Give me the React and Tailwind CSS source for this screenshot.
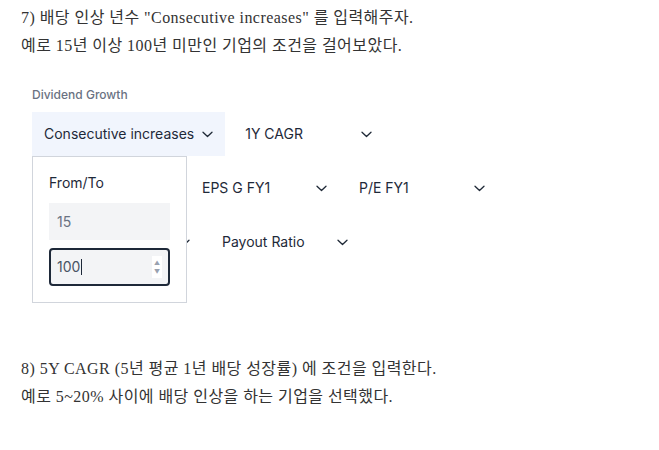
import React from "react"

const Chevron = () => (
  <svg width="11" height="7" viewBox="0 0 11 7" fill="none" className="shrink-0">
    <path d="M1 1.2l4.5 4.3 4.5-4.3" stroke="#1f2937" strokeWidth="1.3" strokeLinecap="round" strokeLinejoin="round" />
  </svg>
)

function Filter({ label, width, active }) {
  return (
    <div
      className={`flex h-[44px] items-center justify-between gap-2 px-3 text-[14px] text-gray-800 ${width} ${
        active ? "bg-[#f1f5fd]" : ""
      }`}
    >
      <span>{label}</span>
      <Chevron />
    </div>
  )
}

export default function App() {
  const serif = { fontFamily: '"Liberation Serif", "Noto Sans CJK KR", serif' }

  return (
    <div className="min-h-[450px] w-[659px] bg-white pl-[21px] pt-[4px] text-[16px] leading-[28px] tracking-[0.45px] text-[#333]" style={serif}>
      <p>7) 배당 인상 년수 "Consecutive increases" 를 입력해주자.</p>
      <p>예로 15년 이상 100년 미만인 기업의 조건을 걸어보았다.</p>

      {/* screener widget */}
      <div className="relative ml-[11px] mt-[27px] tracking-normal" style={{ fontFamily: "Inter, sans-serif" }}>
        <div className="text-[12px] font-medium leading-[16px] text-gray-500">Dividend Growth</div>
        <div className="mt-[9px] flex w-[470px] flex-wrap gap-x-2 gap-y-[10px]">
          <Filter label="Consecutive increases" active />
          <Filter label="1Y CAGR" width="w-[151px]" />
          <Filter label="" width="w-[150px]" />
          <Filter label="EPS G FY1" width="w-[149px]" />
          <Filter label="P/E FY1" width="w-[150px]" />
          <Filter label="" width="w-[170px]" />
          <Filter label="Payout Ratio" width="w-[150px]" />
        </div>

        {/* open dropdown */}
        <div className="absolute left-0 top-[69px] w-[155px] border border-gray-300 bg-white px-4 pb-4 pt-4 text-[14px] leading-[20px]">
          <div className="text-gray-800">From/To</div>
          <div className="mt-[10px] flex h-[37px] items-center bg-gray-100 px-2 text-gray-500">15</div>
          <div className="mt-2 flex h-[38px] items-center justify-between rounded border-2 border-gray-800 bg-gray-100 pl-[6px] pr-[6px] text-gray-600">
            <span className="flex items-center">
              100<span className="ml-px inline-block h-[16px] w-px bg-gray-800" />
            </span>
            <span className="flex h-[22px] w-[10px] flex-col items-center justify-center gap-[3px] bg-white text-[6px] leading-[6px] text-gray-400">
              <span>▲</span>
              <span>▼</span>
            </span>
          </div>
        </div>
      </div>

      <div className="mt-[91px]">
        <p>8) 5Y CAGR (5년 평균 1년 배당 성장률) 에 조건을 입력한다.</p>
        <p>예로 5~20% 사이에 배당 인상을 하는 기업을 선택했다.</p>
      </div>
    </div>
  )
}
